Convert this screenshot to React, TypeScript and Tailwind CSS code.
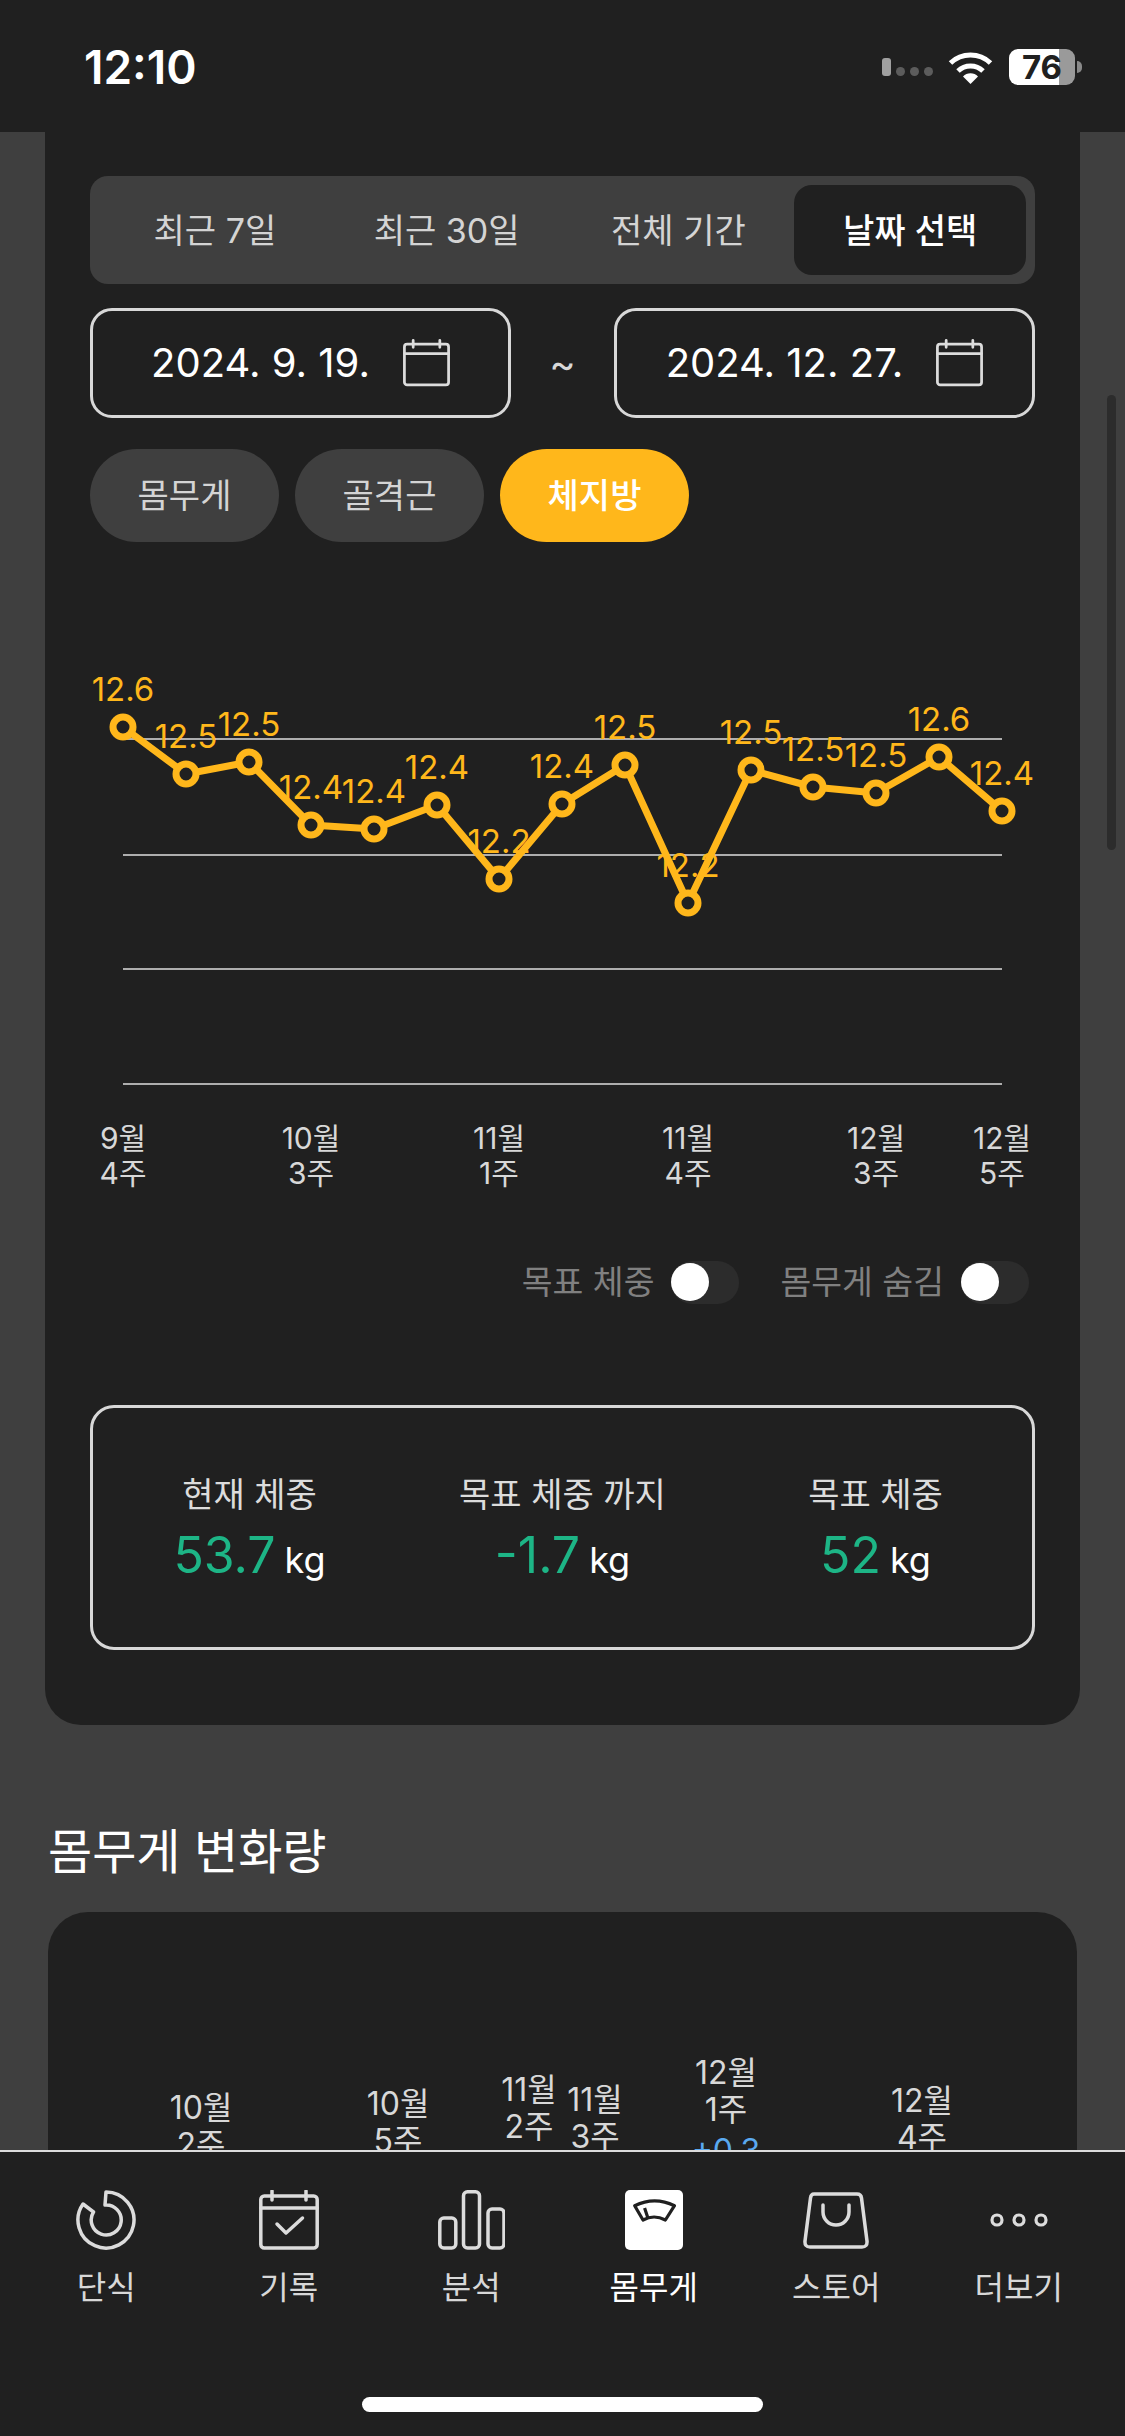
const font = { fontFamily: 'Inter, "Noto Sans CJK KR", sans-serif' };

const points = [
  { x: 123, y: 727, v: '12.6' },
  { x: 186, y: 774, v: '12.5' },
  { x: 249, y: 762, v: '12.5' },
  { x: 311, y: 825, v: '12.4' },
  { x: 374, y: 829, v: '12.4' },
  { x: 437, y: 805, v: '12.4' },
  { x: 499, y: 879, v: '12.2' },
  { x: 562, y: 804, v: '12.4' },
  { x: 625, y: 765, v: '12.5' },
  { x: 688, y: 903, v: '12.2' },
  { x: 751, y: 770, v: '12.5' },
  { x: 813, y: 787, v: '12.5' },
  { x: 876, y: 793, v: '12.5' },
  { x: 939, y: 757, v: '12.6' },
  { x: 1002, y: 811, v: '12.4' },
];

const ticks = [
  { x: 123, a: '9월', b: '4주' },
  { x: 311, a: '10월', b: '3주' },
  { x: 499, a: '11월', b: '1주' },
  { x: 688, a: '11월', b: '4주' },
  { x: 876, a: '12월', b: '3주' },
  { x: 1002, a: '12월', b: '5주' },
];

const changeTicks = [
  { x: 201, a: '10월', b: '2주', ya: 2108 },
  { x: 398, a: '10월', b: '5주', ya: 2104 },
  { x: 529, a: '11월', b: '2주', ya: 2090 },
  { x: 595, a: '11월', b: '3주', ya: 2100 },
  { x: 726, a: '12월', b: '1주', ya: 2073 },
  { x: 922, a: '12월', b: '4주', ya: 2101 },
];

function CalendarIcon({ check, className }: { check?: boolean; className: string }) {
  return (
    <svg viewBox="0 0 60 60" className={className} fill="none" stroke="#dcdcdc" strokeWidth={3.5} strokeLinecap="round" strokeLinejoin="round">
      <rect x="1.8" y="6" width="56.4" height="52" rx="3.5" />
      <path d="M2 18H58M13 1V10M47 1V10" />
      {check && <path d="M18 34L27 43L43.5 28" />}
    </svg>
  );
}

function WeightChart() {
  return (
    <svg viewBox="45 560 1035 640" className="h-[640px] w-[1035px]" style={font}>
      {[739, 855, 969, 1084].map((y) => (
        <line key={y} x1="123" x2="1002" y1={y} y2={y} stroke="#dedede" strokeWidth="1.5" />
      ))}
      <polyline points={points.map((p) => `${p.x},${p.y}`).join(' ')} fill="none" stroke="#ffb71b" strokeWidth="7" strokeLinejoin="round" />
      {points.map((p) => (
        <circle key={p.x} cx={p.x} cy={p.y} r="10" fill="#202020" stroke="#ffb71b" strokeWidth="7" />
      ))}
      {points.map((p) => (
        <text key={p.x} x={p.x} y={p.y - 26} textAnchor="middle" fontSize="33" fill="#ffb71b">
          {p.v}
        </text>
      ))}
      {ticks.map((t) => (
        <text key={t.x} textAnchor="middle" fontSize="30" fill="#d8d8d8">
          <tspan x={t.x} y="1149">{t.a}</tspan>
          <tspan x={t.x} y="1184">{t.b}</tspan>
        </text>
      ))}
    </svg>
  );
}

function Toggle() {
  return (
    <div className="flex h-[43px] w-[68px] items-center rounded-full bg-[#2c2c2c]">
      <div className="h-[38px] w-[38px] rounded-full bg-white" />
    </div>
  );
}

function Stat({ label, value }: { label: string; value: string }) {
  return (
    <div className="flex flex-col items-center pt-[10px]">
      <div className="text-[34px] leading-[44px] text-[#dcdcdc]">{label}</div>
      <div className="mt-[6px] flex items-baseline gap-[9px] leading-[64px]">
        <span className="text-[50px] text-[#1db586]">{value}</span>
        <span className="text-[36px] text-white">kg</span>
      </div>
    </div>
  );
}

function DateBox({ value }: { value: string }) {
  return (
    <div className="flex h-[110px] w-[421px] items-center justify-center gap-[33px] rounded-[22px] border-[3px] border-[#d8d8d8]">
      <span className="text-[40px] text-white">{value}</span>
      <CalendarIcon className="h-[50px] w-[47px]" />
    </div>
  );
}

function NavItem({ label, active, children }: { label: string; active?: boolean; children: React.ReactNode }) {
  return (
    <div className="flex flex-col items-center">
      <div className="flex h-[60px] items-center justify-center">{children}</div>
      <div className={`mt-[18px] text-[32px] leading-[40px] ${active ? 'text-white' : 'text-[#d8d8d8]'}`}>{label}</div>
    </div>
  );
}

export default function App() {
  return (
    <div className="relative flex h-[2436px] w-[1125px] flex-col overflow-hidden bg-[#3f3f3f]" style={font}>
      <header className="flex h-[132px] shrink-0 items-center justify-between bg-[#202020] pl-[84px] pr-[43px] pt-[2px]">
        <span className="text-[46px] font-semibold text-white">12:10</span>
        <div className="flex items-center">
          <div className="flex items-end gap-[5px]">
            <div className="h-[18px] w-[9px] rounded-[3px] bg-[#a0a0a0]" />
            <div className="h-[9px] w-[9px] rounded-full bg-[#5c5c5c]" />
            <div className="h-[9px] w-[9px] rounded-full bg-[#5c5c5c]" />
            <div className="h-[9px] w-[9px] rounded-full bg-[#5c5c5c]" />
          </div>
          <svg viewBox="0 0 45 33" className="ml-[15px] h-[33px] w-[45px]" fill="none" stroke="#fff" strokeWidth="5">
            <path d="M2.5 12A29 29 0 0 1 42.5 12" />
            <path d="M10 20A18 18 0 0 1 35 20" />
            <path d="M22.5 33L15 25.5A10.5 10.5 0 0 1 30 25.5Z" fill="#fff" stroke="none" />
          </svg>
          <div className="ml-[16px] flex h-[36px] w-[66px] items-center justify-center rounded-[9px] bg-[linear-gradient(90deg,#fff_76%,#9a9a9a_76%)] text-[33px] font-bold leading-none text-[#202020]">
            76
          </div>
          <div className="ml-[2px] h-[12px] w-[5px] rounded-r-full bg-[#8a8a8a]" />
        </div>
      </header>

      <main className="min-h-0 flex-1 overflow-hidden">
        <section className="mx-[45px] rounded-b-[36px] bg-[#202020] px-[45px] pb-[75px] pt-[44px]">
          <div className="grid h-[108px] grid-cols-4 rounded-[18px] bg-[#3f3f3f] p-[9px] text-[34px] text-[#d4d4d4]">
            <div className="flex items-center justify-center">최근 7일</div>
            <div className="flex items-center justify-center">최근 30일</div>
            <div className="flex items-center justify-center">전체 기간</div>
            <div className="flex items-center justify-center rounded-[18px] bg-[#202020] font-medium text-white">날짜 선택</div>
          </div>

          <div className="mt-[24px] flex items-center justify-between">
            <DateBox value="2024. 9. 19." />
            <span className="pt-[2px] text-[40px] text-[#d8d8d8]">~</span>
            <DateBox value="2024. 12. 27." />
          </div>

          <div className="mt-[31px] flex gap-[16px] text-[34px]">
            <div className="flex h-[93px] w-[189px] items-center justify-center rounded-full bg-[#3f3f3f] text-[#d4d4d4]">몸무게</div>
            <div className="flex h-[93px] w-[189px] items-center justify-center rounded-full bg-[#3f3f3f] text-[#d4d4d4]">골격근</div>
            <div className="flex h-[93px] w-[189px] items-center justify-center rounded-full bg-[#ffb71b] font-medium text-white">체지방</div>
          </div>

          <div className="-mx-[45px] mt-[18px]">
            <WeightChart />
          </div>

          <div className="mt-[57px] flex items-center justify-end gap-[41px] pr-[6px] text-[33.5px] text-[#808080]">
            <div className="flex items-center gap-[17px]">
              <span>목표 체중</span>
              <Toggle />
            </div>
            <div className="flex items-center gap-[17px]">
              <span>몸무게 숨김</span>
              <Toggle />
            </div>
          </div>

          <div className="mt-[98px] grid h-[245px] grid-cols-3 items-center rounded-[24px] border-[3px] border-[#d8d8d8]">
            <Stat label="현재 체중" value="53.7" />
            <Stat label="목표 체중 까지" value="-1.7" />
            <Stat label="목표 체중" value="52" />
          </div>
        </section>

        <h2 className="ml-[48px] mt-[93px] text-[48px] font-normal leading-[68px] text-white">몸무게 변화량</h2>

        <section className="mx-[48px] mt-[26px] h-[500px] rounded-[40px] bg-[#202020]">
          <svg viewBox="48 1913 1029 500" className="h-[500px] w-[1029px]" style={font}>
            {changeTicks.map((t) => (
              <text key={t.x} textAnchor="middle" fontSize="32" fill="#d8d8d8">
                <tspan x={t.x} y={t.ya + 12}>{t.a}</tspan>
                <tspan x={t.x} y={t.ya + 49}>{t.b}</tspan>
              </text>
            ))}
            <text x="726" y="2163" textAnchor="middle" fontSize="32" fill="#5aa9f0">+0.3</text>
          </svg>
        </section>
      </main>

      <nav className="relative z-10 h-[286px] shrink-0 border-t-2 border-[#dcdcdc] bg-[#202020] pt-[38px]">
        <div className="grid grid-cols-6 px-[15px]">
          <NavItem label="단식">
            <svg viewBox="0 0 60 60" className="h-[60px] w-[60px]" fill="none" stroke="#dcdcdc" strokeWidth="3.5" strokeLinejoin="round">
              <path d="M30 2A28 28 0 1 1 7 14L17.5 22A15 15 0 1 0 29 15Z" />
            </svg>
          </NavItem>
          <NavItem label="기록">
            <CalendarIcon check className="h-[60px] w-[60px]" />
          </NavItem>
          <NavItem label="분석">
            <svg viewBox="0 0 67 60" className="h-[60px] w-[67px]" fill="none" stroke="#dcdcdc" strokeWidth="3.5">
              <rect x="1.8" y="28" width="16" height="30" rx="4" />
              <rect x="25.5" y="1.8" width="16" height="56.2" rx="4" />
              <rect x="50" y="19" width="16" height="39" rx="4" />
            </svg>
          </NavItem>
          <NavItem label="몸무게" active>
            <svg viewBox="0 0 58 60" className="h-[60px] w-[58px]">
              <rect width="58" height="60" rx="5" fill="#fff" />
              <path d="M9.7 15.7Q29.6 6 49.5 15.7L40.4 30Q29 24 18 30ZM19.6 18L22.5 26.7" fill="none" stroke="#202020" strokeWidth="3.2" strokeLinejoin="round" />
            </svg>
          </NavItem>
          <NavItem label="스토어">
            <svg viewBox="0 0 66 57" className="h-[57px] w-[66px]" fill="none" stroke="#dcdcdc" strokeWidth="3.5" strokeLinejoin="round">
              <path d="M11 2H54Q58 2 58.5 6L64 49Q64.5 55 59 55H7Q1.5 55 2 49L7.5 6Q8 2 11 2Z" />
              <path d="M20 13V20A13 13 0 0 0 46 20V13" strokeLinecap="round" />
            </svg>
          </NavItem>
          <NavItem label="더보기">
            <svg viewBox="0 0 58 16" className="h-[16px] w-[58px]" fill="none" stroke="#dcdcdc" strokeWidth="3.2">
              <circle cx="7" cy="8" r="5" />
              <circle cx="29" cy="8" r="5" />
              <circle cx="51" cy="8" r="5" />
            </svg>
          </NavItem>
        </div>
      </nav>

      <div className="absolute left-[362px] top-[2397px] z-20 h-[15px] w-[401px] rounded-full bg-white" />
      <div className="absolute left-[1107px] top-[395px] h-[455px] w-[9px] rounded-full bg-[#2c2c2c]" />
    </div>
  );
}
